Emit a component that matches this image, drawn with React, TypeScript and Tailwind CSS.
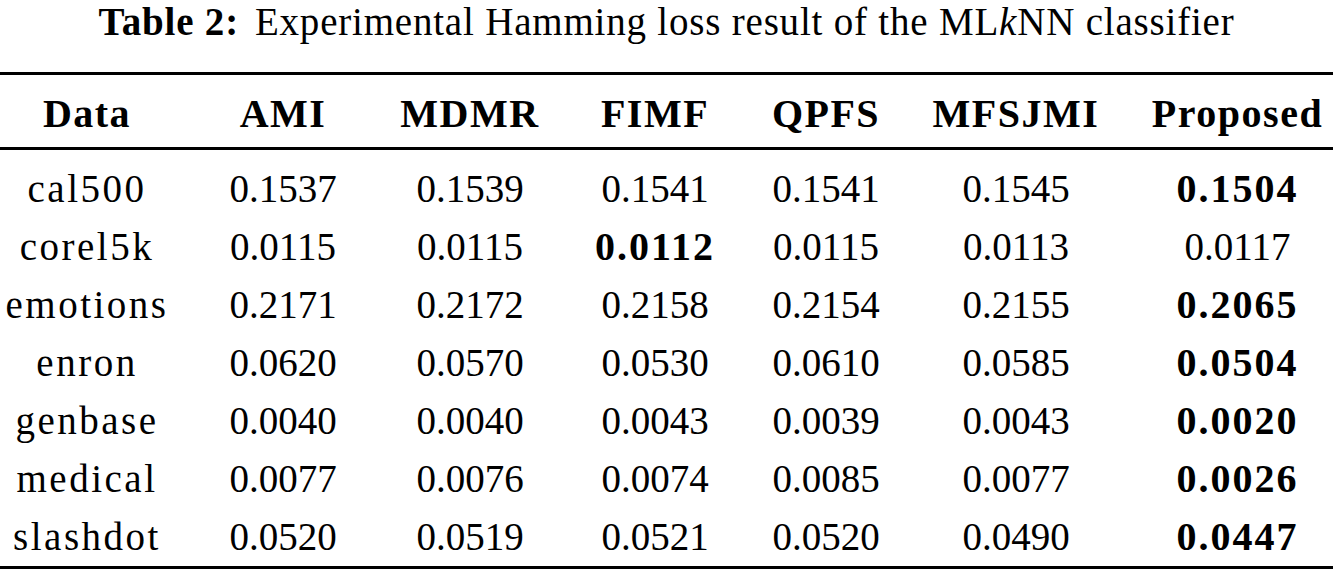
const columns = ["Data", "AMI", "MDMR", "FIMF", "QPFS", "MFSJMI", "Proposed"];

// [name, values, index of the bold (best) value]
const rows: [string, string[], number][] = [
  ["cal500", ["0.1537", "0.1539", "0.1541", "0.1541", "0.1545", "0.1504"], 5],
  ["corel5k", ["0.0115", "0.0115", "0.0112", "0.0115", "0.0113", "0.0117"], 2],
  ["emotions", ["0.2171", "0.2172", "0.2158", "0.2154", "0.2155", "0.2065"], 5],
  ["enron", ["0.0620", "0.0570", "0.0530", "0.0610", "0.0585", "0.0504"], 5],
  ["genbase", ["0.0040", "0.0040", "0.0043", "0.0039", "0.0043", "0.0020"], 5],
  ["medical", ["0.0077", "0.0076", "0.0074", "0.0085", "0.0077", "0.0026"], 5],
  ["slashdot", ["0.0520", "0.0519", "0.0521", "0.0520", "0.0490", "0.0447"], 5],
];

const grid = "grid grid-cols-[174px_218px_156px_214px_128px_252px_191px]";

export default function App() {
  return (
    <div className="w-[1333px] h-[573px] bg-white text-black overflow-hidden font-['Liberation_Serif',serif]">
      {/* caption */}
      <div className="h-[43px] text-[39px] leading-[43px] tracking-[0.8px] text-center whitespace-nowrap">
        <span className="font-bold">Table 2:</span>
        <span className="ml-[16px]">
          Experimental Hamming loss result of the ML<i>k</i>NN classifier
        </span>
      </div>

      <div className="mt-[29px] h-[3px] bg-black" />

      {/* header */}
      <div className={`${grid} pt-[10px] pb-[4px] text-[40px] leading-[58px] font-bold tracking-[1.5px] text-center`}>
        {columns.map((c) => (
          <div key={c} className="whitespace-nowrap">{c}</div>
        ))}
      </div>

      <div className="h-[3px] bg-black" />

      {/* body */}
      <div className="pt-[10px]">
        {rows.map(([name, values, best]) => (
          <div key={name} className={`${grid} text-[39px] leading-[58px] text-center`}>
            <div className="whitespace-nowrap tracking-[2.5px]">{name}</div>
            {values.map((v, i) => (
              <div key={i} className={i === best ? "font-bold text-[40px] tracking-[2px]" : ""}>
                {v}
              </div>
            ))}
          </div>
        ))}
      </div>

      <div className="h-[3px] bg-black" />
    </div>
  );
}
